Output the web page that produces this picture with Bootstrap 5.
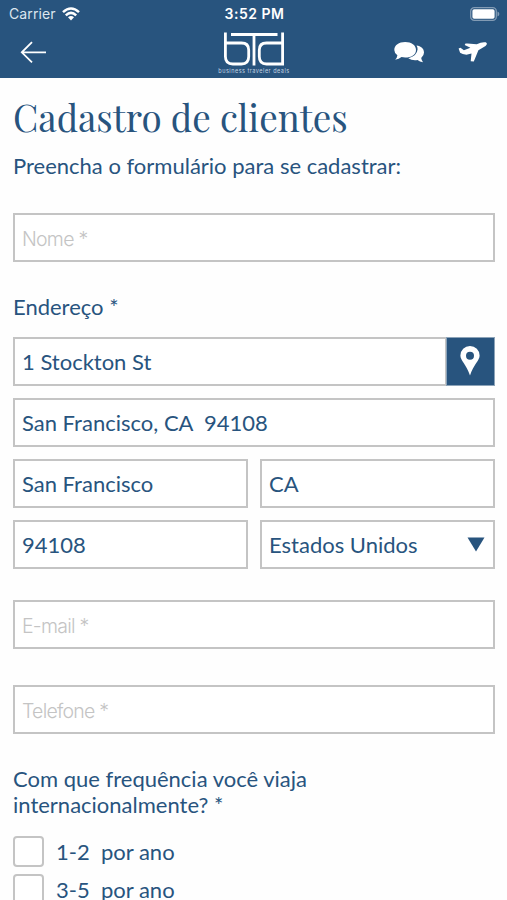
<!DOCTYPE html>
<html lang="pt-BR">
<head>
<meta charset="utf-8">
<meta name="viewport" content="width=device-width, initial-scale=1">
<title>Cadastro de clientes</title>
<link href="https://cdn.jsdelivr.net/npm/bootstrap@5.3.0/dist/css/bootstrap.min.css" rel="stylesheet">
<style>
:root { --brand: #28547e; --line: #c4c4c4; }
html, body { height: 900px; overflow: hidden; }
body { font-family: Lato, sans-serif; font-size: 22px; line-height: 26px; color: var(--brand); background: #fefefe; }
svg { display: block; flex: none; }
.app-head { height: 78px; background: var(--brand); color: #fff; }
.status { height: 28px; font-family: Inter, sans-serif; font-size: 14px; line-height: 28px; padding: 0 7px 0 9px; }
.status .side { flex: 1 1 0; }
.carrier { color: #dce6ef; letter-spacing: .1px; }
.clock { font-weight: 600; font-size: 14px; letter-spacing: .5px; }
.tools { height: 50px; padding: 0 19px 0 20px; }
.tools .side { flex: 1 1 0; }
.logo-name { font-family: Inter, sans-serif; font-size: 5.5px; line-height: 7px; letter-spacing: .5px; color: #c3d3e1; white-space: nowrap; }
.page { padding: 0 12px 0 13px; }
.page-title { font-family: "Playfair Display", "Liberation Serif", serif; font-size: 36.8px; line-height: 44px; font-weight: 400; margin: 17px 0 14px; white-space: nowrap; }
.intro { margin-bottom: 34px; white-space: nowrap; }
.form-control.field, .form-select.field { height: 49px; border: 2px solid var(--line); border-radius: 0; padding: 0 7px; font-size: 22px; line-height: 26px; color: var(--brand); background-color: #fff; box-shadow: none; }
.field::placeholder { font-family: Inter, "Liberation Sans", sans-serif; font-weight: 300; font-size: 19.5px; letter-spacing: -.75px; color: #c4c4c4; opacity: 1; }
.form-select.field { background-image: none; }
.stack { gap: 12px; }
.half { flex: 1 1 0; min-width: 0; }
.pin { width: 49px; height: 49px; border: 1px solid #8ca3b8; border-radius: 0; background: var(--brand); }
.pin svg { margin: 0 2px 2px 0; }
.arrow { right: 10px; top: 17px; pointer-events: none; }
.form-check-input.box { width: 31px; height: 31px; margin: 0; float: none; border: 2px solid var(--line); border-radius: 4px; }
.choice { height: 31px; gap: 12px; white-space: pre; }
</style>
</head>
<body>
<header class="app-head">
  <div class="status d-flex align-items-center">
    <div class="side d-flex align-items-center">
      <span class="carrier">Carrier</span>
      <svg style="margin-left:6px" width="18" height="14" viewBox="0 0 18 14" fill="none" stroke="#fff" stroke-width="2.5"><path d="M1 5.2Q9-2.2 17 5.2M3.8 8.3Q9 3.4 14.2 8.3"/><path d="M6 10.3Q9 7.6 12 10.3L9 13.6Z" fill="#fff" stroke="none"/></svg>
    </div>
    <span class="clock">3:52 PM</span>
    <div class="side d-flex justify-content-end">
      <svg width="30" height="14" viewBox="0 0 30 14"><rect x=".7" y=".7" width="25.6" height="12.6" rx="3.6" fill="none" stroke="#829bb4" stroke-width="1.3"/><rect x="2.4" y="2.3" width="22.2" height="9.4" rx="1.8" fill="#fff"/><path d="M27.5 4.6Q29.4 5.4 29.4 7T27.5 9.4Z" fill="#829bb4"/></svg>
    </div>
  </div>
  <div class="tools d-flex">
    <div class="side">
      <svg width="27" height="48" viewBox="0 0 27 48" fill="none" stroke="#fff" stroke-width="1.8"><path d="M26 24.3H1.8M12 14.2 1.8 24.3 12 34.3"/></svg>
    </div>
    <div class="d-flex flex-column align-items-center">
      <svg width="62" height="40" viewBox="0 0 62 40" fill="none" stroke="#fff" stroke-width="2.8"><path d="M2.4 4.5V28.5Q2.4 36 9.8 36H18.5Q25.7 36 25.7 28.5V22Q25.7 15 18.5 15H2.4M59.6 4.5V36H43.500Q36.300 36 36.300 28.500V22Q36.300 15 43.500 15H59.600M8 6.500H54.500M31 6.500V37.400"/></svg>
      <span class="logo-name">business traveler deals</span>
    </div>
    <div class="side d-flex justify-content-end">
      <svg width="30" height="48" viewBox="0 0 30 48"><path d="M22.5 17.5C27 18 30 20.7 30 24.5Q30 27.7 27.2 30Q27.5 32 29 34.3Q25.8 33.7 23.5 32Q18 32.8 14.3 30.2Q23 28 23.6 21.2Q23.6 19.3 22.5 17.5Z" fill="#fff"/><path d="M11.2 14C17.5 14 22 17.2 22 21.9S17.5 29.5 11.2 29.5Q9.3 29.5 7.5 29.1Q5 31.3 1.2 31.7Q3.2 29.6 3.4 27.3Q.3 25 .3 21.9C.3 17.2 4.9 14 11.2 14Z" fill="#fff"/></svg>
      <svg style="margin-left:34px" width="30" height="48" viewBox="0 0 30 48" fill="#fff"><path d="M18.7 16.2Q24 13.6 27.7 14.3Q30.2 15.5 27.5 17.9L20.4 22.3L15.8 33.4L12.7 33.2L13.5 25.4L8.4 26.7Q4.2 26.4 2.1 24.7L.6 20.4L2.5 19.8L5.9 22.3L12.4 19.7L6.7 17L7.5 15.6L9.5 15.4Z"/></svg>
    </div>
  </div>
</header>
<main class="page">
  <h1 class="page-title">Cadastro de clientes</h1>
  <p class="intro">Preencha o formulário para se cadastrar:</p>
  <form>
    <input class="form-control field" type="text" placeholder="Nome *" aria-label="Nome">
    <label class="d-block" for="street" style="margin:32px 0 17px">Endereço *</label>
    <div class="stack d-flex flex-column">
      <div class="input-group flex-nowrap">
        <input id="street" class="form-control field" type="text" value="1 Stockton St">
        <button class="pin btn p-0 d-flex align-items-center justify-content-center" type="button" aria-label="Localização">
          <svg width="20" height="30" viewBox="0 0 20 30"><path fill="#fff" fill-rule="evenodd" d="M10 0A9.6 9.6 0 0 1 19.6 9.7C19.6 14.5 13.5 18.5 10 29.5C6.500 18.500 .4 14.500 .4 9.700A9.600 9.600 0 0 1 10 0ZM10 5.700A4 4 0 1 0 10 13.700A4 4 0 1 0 10 5.700Z"/></svg>
        </button>
      </div>
      <input class="form-control field" type="text" value="San Francisco, CA  94108" aria-label="Complemento">
      <div class="stack d-flex">
        <div class="half"><input class="form-control field" type="text" value="San Francisco" aria-label="Cidade"></div>
        <div class="half"><input class="form-control field" type="text" value="CA" aria-label="Estado"></div>
      </div>
      <div class="stack d-flex">
        <div class="half"><input class="form-control field" type="text" value="94108" aria-label="CEP"></div>
        <div class="half position-relative">
          <select class="form-select field" aria-label="País"><option>Estados Unidos</option></select>
          <svg class="arrow position-absolute" width="18" height="15" viewBox="0 0 18 15"><path d="M.5.5H17.500L9 14.500Z" fill="#28547e"/></svg>
        </div>
      </div>
    </div>
    <input class="form-control field" style="margin-top:31px" type="email" placeholder="E-mail *" aria-label="E-mail">
    <input class="form-control field" style="margin-top:36px" type="tel" placeholder="Telefone *" aria-label="Telefone">
    <p style="margin:32px 0 18px">Com que frequência você viaja<br>internacionalmente? *</p>
    <label class="choice d-flex align-items-center"><input class="form-check-input box" type="checkbox"><span>1-2  por ano</span></label>
    <label class="choice d-flex align-items-center" style="margin-top:7px"><input class="form-check-input box" type="checkbox"><span>3-5  por ano</span></label>
  </form>
</main>
<script src="https://cdn.jsdelivr.net/npm/bootstrap@5.3.0/dist/js/bootstrap.bundle.min.js"></script>
</body>
</html>
